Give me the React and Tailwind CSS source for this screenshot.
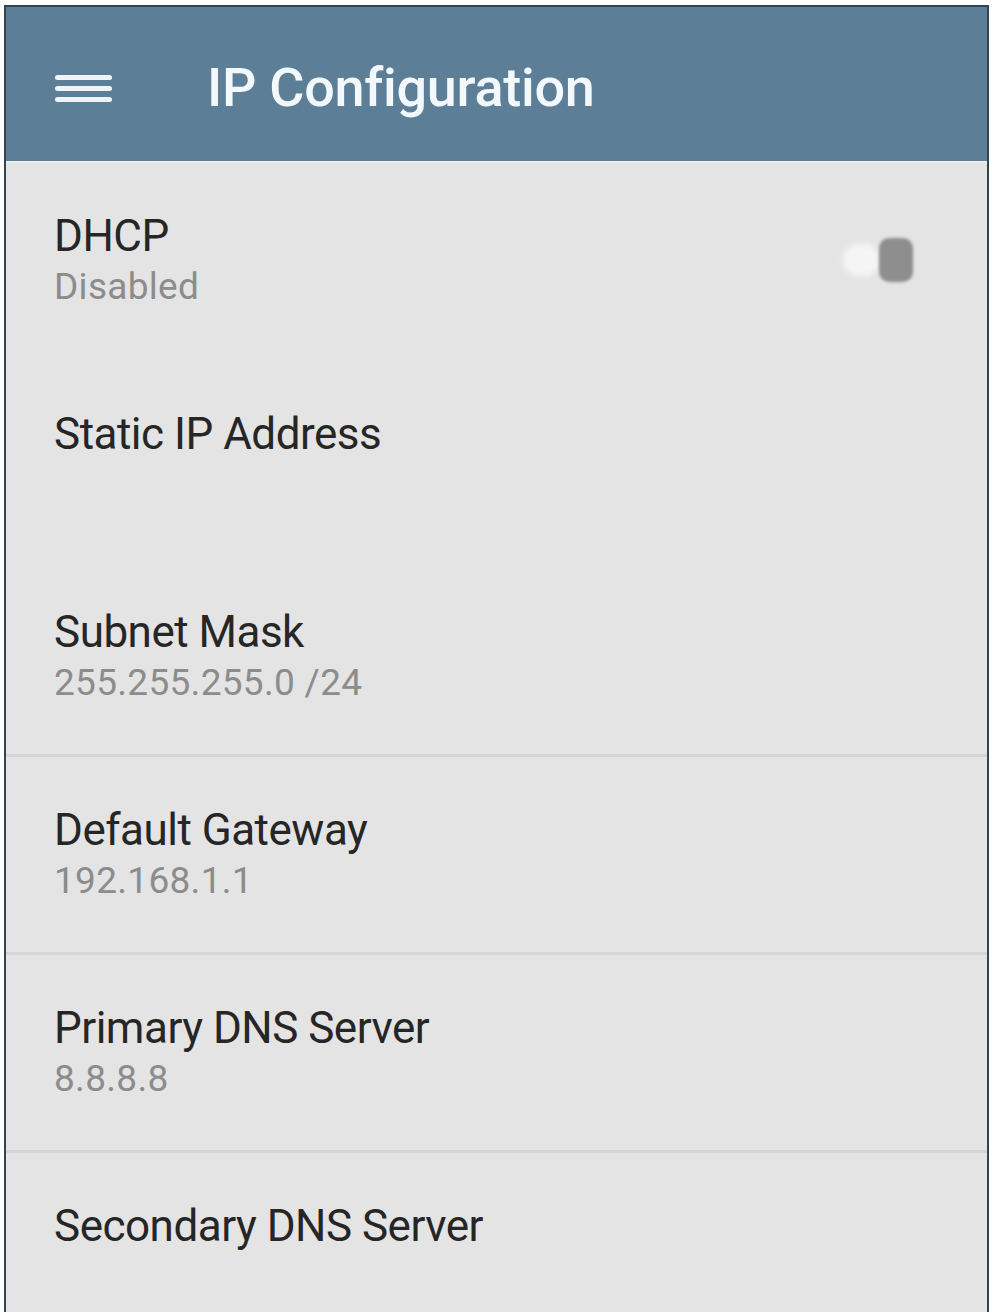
import React from "react";

const rows = [
  { title: "DHCP", value: "Disabled", toggle: true, line: false },
  { title: "Static IP Address", value: "", line: false },
  { title: "Subnet Mask", value: "255.255.255.0 /24", line: true },
  { title: "Default Gateway", value: "192.168.1.1", line: true },
  { title: "Primary DNS Server", value: "8.8.8.8", line: true },
  { title: "Secondary DNS Server", value: "", line: false },
];

const Toggle = () => (
  <div className="flex items-center mr-[74px] mt-[28px]">
    <div className="w-[38px] h-[32px] rounded-full bg-[#f5f5f5] blur-[3px]" />
    <div className="w-[34px] h-[44px] rounded-[10px] bg-[#8e8e8e] blur-[1.5px] -ml-[2px]" />
  </div>
);

const Row = ({ title, value, toggle, line }) => (
  <div
    className={
      "h-[198px] border-b-[3px] flex items-start justify-between pl-[48px] pt-[47px] " +
      (line ? "border-[#d5d5d5]" : "border-transparent")
    }
  >
    <div className="flex flex-col">
      <span className="text-[44px] leading-[1.2] text-[#262626] tracking-[-0.5px]">{title}</span>
      {value && (
        <span className="text-[37px] leading-[1.1] text-[#8c8c8c] mt-[4px] tracking-[0.3px]">{value}</span>
      )}
    </div>
    {toggle && <Toggle />}
  </div>
);

export default function App() {
  return (
    <div className="min-h-screen bg-white pt-[5px] px-[4px]" style={{ fontFamily: "Roboto, 'Noto Sans', sans-serif" }}>
      <div className="h-[1307px] overflow-hidden border-2 border-b-0 border-[#34444f] bg-[#e3e3e3]">
        {/* Toolbar */}
        <div className="h-[156px] bg-[#5c7f97] flex items-center pl-[49px] border-b-2 border-[#eeeeee]">
          <div className="flex flex-col gap-[6px] w-[57px] mt-[8px]">
            <div className="h-[5px] bg-[#eef4f7] rounded-sm" />
            <div className="h-[5px] bg-[#eef4f7] rounded-sm" />
            <div className="h-[5px] bg-[#eef4f7] rounded-sm" />
          </div>
          <h1 className="ml-[95px] text-[54px] font-medium text-[#f2f8fb] leading-none mt-[8px] tracking-[-0.3px]">
            IP Configuration
          </h1>
        </div>
        {/* Settings list */}
        <div className="flex flex-col bg-[#e4e4e4]">
          {rows.map((r) => (
            <Row key={r.title} {...r} />
          ))}
        </div>
      </div>
    </div>
  );
}
